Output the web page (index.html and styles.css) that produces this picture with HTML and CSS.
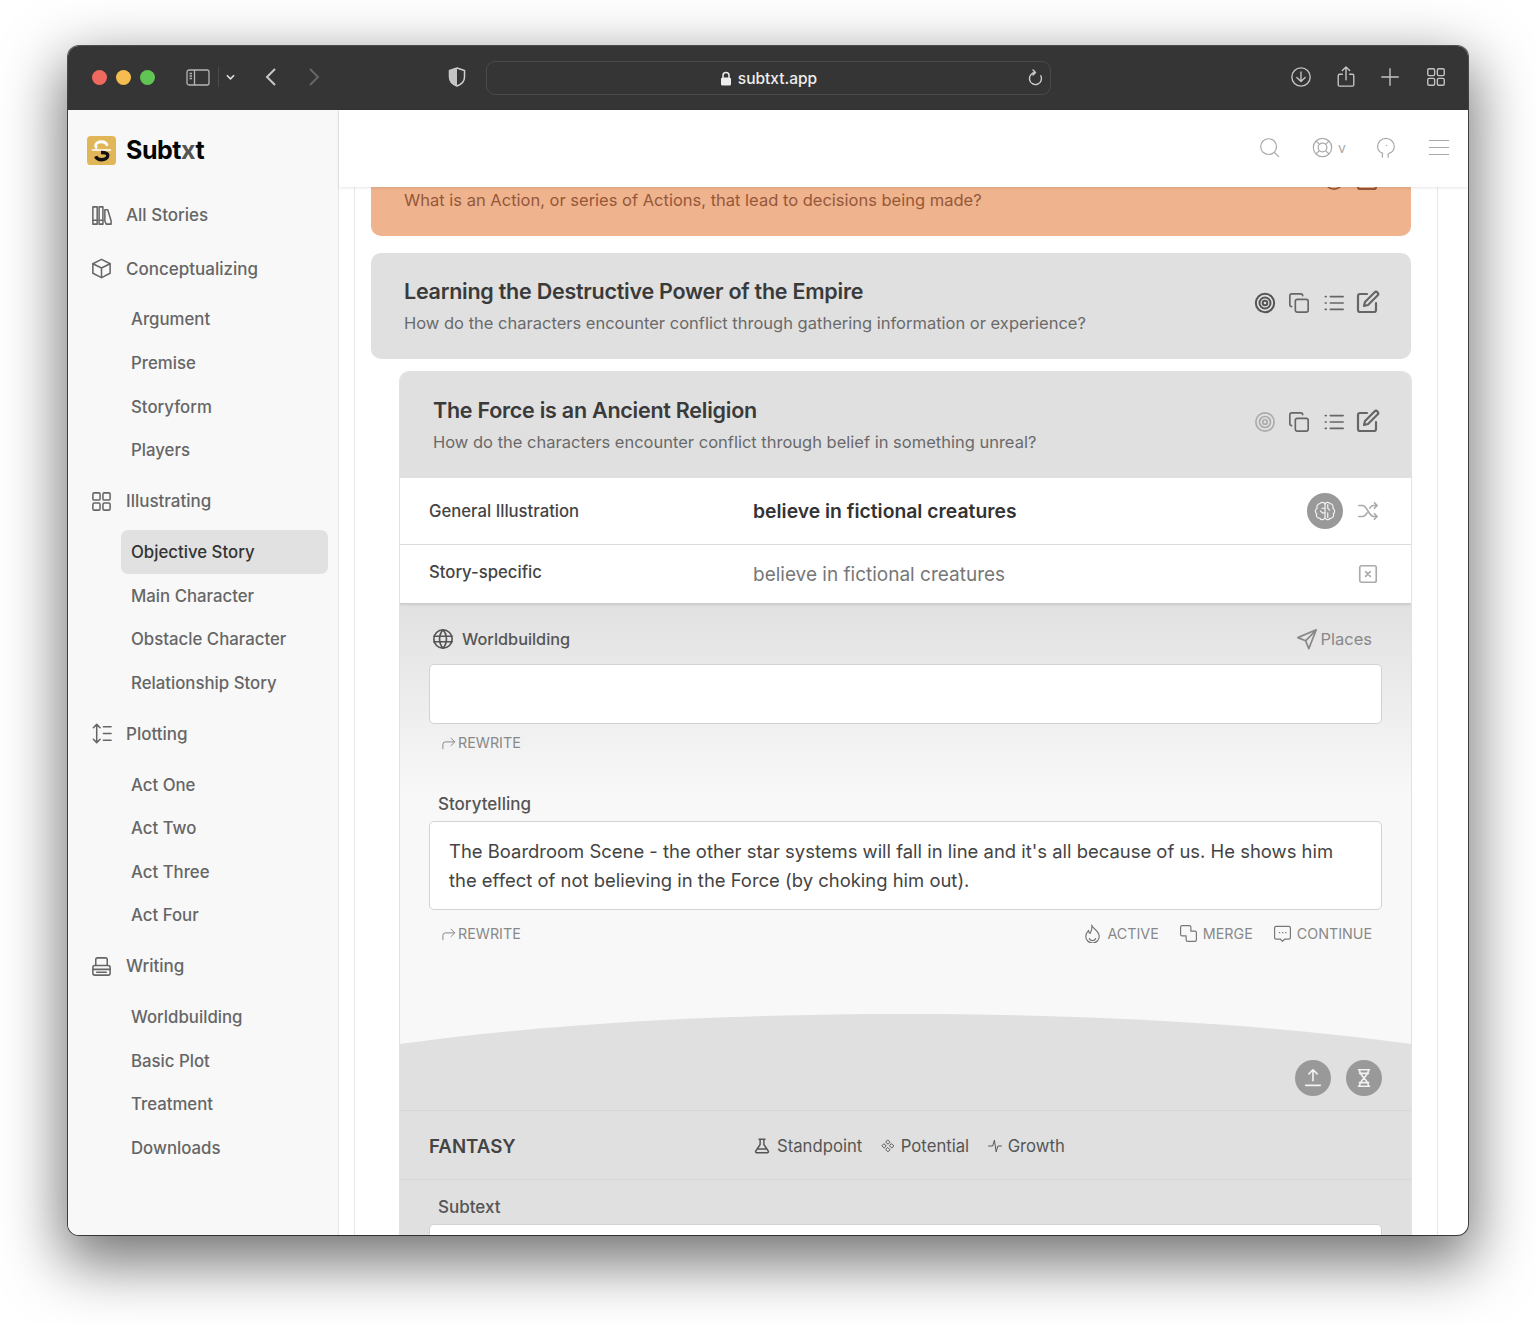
FILE: index.html
```html
<!DOCTYPE html>
<html lang="en">
<head>
<meta charset="utf-8">
<title>Subtxt</title>
<link rel="stylesheet" href="styles.css">
</head>
<body>
<svg class="sprite" aria-hidden="true">
  <symbol id="books" viewBox="0 0 24 24"><path d="M3 3h4.500v18H3zM9.500 3h4v18h-4zM15.500 6h3L22 17.500V21h-5l-1.500-3z"/><path d="M3 17h4.500M9.500 17h4"/></symbol>
  <symbol id="box" viewBox="0 0 24 24"><path d="M12 2.500l9 4.500v10l-9 4.500-9-4.500V7z"/><path d="M3 7l9 4.500L21 7M12 11.500v10"/></symbol>
  <symbol id="grid" viewBox="0 0 24 24"><rect x="3" y="3" width="7.500" height="7.500" rx="1.500"/><rect x="13.500" y="3" width="7.500" height="7.500" rx="1.500"/><rect x="3" y="13.500" width="7.500" height="7.500" rx="1.500"/><rect x="13.500" y="13.500" width="7.500" height="7.500" rx="1.500"/></symbol>
  <symbol id="plot" viewBox="0 0 24 24"><path d="M7 3v18M3.500 6L7 2.500 10.500 6M3.500 18L7 21.500l3.500-3.500M14 5h8M14 12h8M14 19h8"/></symbol>
  <symbol id="printer" viewBox="0 0 24 24"><path d="M6 11V5a2 2 0 0 1 2-2h8a2 2 0 0 1 2 2v6"/><rect x="3" y="11" width="18" height="10" rx="2"/><path d="M3 15h18M7 18h10"/></symbol>
  <symbol id="target" viewBox="0 0 24 24"><circle cx="12" cy="12" r="10"/><circle cx="12" cy="12" r="6"/><circle cx="12" cy="12" r="2.500"/></symbol>
  <symbol id="copy" viewBox="0 0 24 24"><rect x="8" y="8" width="14" height="14" rx="2"/><path d="M4 16a2 2 0 0 1-2-2V4a2 2 0 0 1 2-2h10a2 2 0 0 1 2 2"/></symbol>
  <symbol id="list" viewBox="0 0 24 24"><path d="M8 5h14M8 12h14M8 19h14M2.500 5h1M2.500 12h1M2.500 19h1"/></symbol>
  <symbol id="edit" viewBox="0 0 24 24"><path d="M11 4H4a2 2 0 0 0-2 2v14a2 2 0 0 0 2 2h14a2 2 0 0 0 2-2v-7"/><path d="M18.500 2.500a2.100 2.100 0 0 1 3 3L12 15l-4 1 1-4z"/></symbol>
  <symbol id="shuffle" viewBox="0 0 24 24"><path d="M2 6h4c5 0 7 12 12 12h4M2 18h4c2 0 3.500-1.500 5-4M14 9c1-2 2.500-3 4-3h4M19 3l3 3-3 3M19 15l3 3-3 3"/></symbol>
  <symbol id="xbox" viewBox="0 0 24 24"><rect x="3" y="3" width="18" height="18" rx="2"/><path d="M9.500 9.500l5 5M14.500 9.500l-5 5"/></symbol>
  <symbol id="globe" viewBox="0 0 24 24"><circle cx="12" cy="12" r="10"/><path d="M2 9h20M2 15h20"/><path d="M12 2c-5 5.500-5 14.500 0 20M12 2c5 5.500 5 14.500 0 20"/></symbol>
  <symbol id="send" viewBox="0 0 24 24"><path d="M22 2L2 10.500l8.500 3.500L14 22.500zM22 2L10.500 14"/></symbol>
  <symbol id="rewrite" viewBox="0 0 24 24"><path d="M3 22v-7a4 4 0 0 1 4-4h15M16 5l6 6-6 6"/></symbol>
  <symbol id="flame" viewBox="0 0 24 24"><path d="M11 1.500c.5 4 9.500 7 9.500 14a8.500 8.500 0 0 1-17 0c0-3 1.500-5.500 3.500-7.500.2 2 1 3.500 2 4C10.500 9 12 5.500 11 1.500z"/><path d="M8 18.500a4.500 4.500 0 0 0 8 0"/></symbol>
  <symbol id="merge" viewBox="0 0 24 24"><path d="M9 15H4a2 2 0 0 1-2-2V4a2 2 0 0 1 2-2h9a2 2 0 0 1 2 2v5h5a2 2 0 0 1 2 2v9a2 2 0 0 1-2 2h-9a2 2 0 0 1-2-2z"/></symbol>
  <symbol id="chat" viewBox="0 0 24 24"><path d="M4 3h16a2 2 0 0 1 2 2v12a2 2 0 0 1-2 2h-5l-3 3-3-3H4a2 2 0 0 1-2-2V5a2 2 0 0 1 2-2z"/><path d="M8 11h.5M12 11h.5M16 11h.5"/></symbol>
  <symbol id="upload" viewBox="0 0 24 24"><path d="M12 15V3M7.500 7.500L12 3l4.500 4.500M4 20h16"/></symbol>
  <symbol id="dna" viewBox="0 0 24 24"><path d="M6 3h12M6 21h12M7 3c0 7 10 11 10 18M17 3c0 7-10 11-10 18M7 7h10M7 17h10"/></symbol>
  <symbol id="brain" viewBox="0 0 24 24"><path d="M12 5a3 3 0 0 0-5.500-1A3.500 3.500 0 0 0 3.500 9 3.500 3.500 0 0 0 3 15a3.500 3.500 0 0 0 3.500 5A3 3 0 0 0 12 19zM12 5a3 3 0 0 1 5.500-1A3.500 3.500 0 0 1 20.500 9a3.500 3.500 0 0 1 .5 6 3.500 3.500 0 0 1-3.500 5A3 3 0 0 1 12 19z"/><path d="M12 9H8.500M12 14H9l-2-2M15 5v4l2 2M15 19v-5"/></symbol>
  <symbol id="flask" viewBox="0 0 24 24"><path d="M8 3h8M9.500 3v7L3.500 19a1.500 1.500 0 0 0 1.500 2h14a1.500 1.500 0 0 0 1.500-2l-6-9V3M6 16h12"/></symbol>
  <symbol id="diamonds" viewBox="0 0 24 24"><path d="M12 2l3.500 3.500L12 9 8.500 5.500zM12 15l3.500 3.500L12 22l-3.500-3.500zM5.500 8.500L9 12l-3.500 3.500L2 12zM18.500 8.500L22 12l-3.500 3.500L15 12z"/></symbol>
  <symbol id="pulse" viewBox="0 0 24 24"><path d="M1 12h7l3-10 3 20 3-10h6"/></symbol>
  <symbol id="search" viewBox="0 0 24 24"><circle cx="11" cy="11" r="9"/><path d="M18 18l4.500 4.500"/></symbol>
  <symbol id="life" viewBox="0 0 24 24"><circle cx="12" cy="12" r="10.500"/><circle cx="12" cy="12" r="5"/><path d="M5 5l3.500 3.500M19 5l-3.500 3.500M5 19l3.500-3.500M19 19l-3.500-3.500"/></symbol>
  <symbol id="head" viewBox="0 0 24 24"><path d="M8.500 23v-4.500C5 17 3 14.500 3 11a9.500 9.500 0 0 1 19 0c0 3.500-2 6-5.500 7.500l-1.500 1V23M13 9.500h.5"/></symbol>
  <symbol id="menu" viewBox="0 0 24 24"><path d="M1 4h22M1 12h22M1 20h22"/></symbol>
  <symbol id="dl" viewBox="0 0 24 24"><circle cx="12" cy="12" r="10"/><path d="M12 6.500v10.500M7.500 12.500L12 17l4.500-4.500"/></symbol>
  <symbol id="share" viewBox="0 0 24 24"><path d="M8 9H5a1.500 1.500 0 0 0-1.500 1.500v10A1.500 1.500 0 0 0 5 22h14a1.500 1.500 0 0 0 1.500-1.500v-10A1.500 1.500 0 0 0 19 9h-3M12 15V1.500M8 5l4-4 4 4"/></symbol>
  <symbol id="plus" viewBox="0 0 24 24"><path d="M12 3v18M3 12h18"/></symbol>
  <symbol id="reload" viewBox="0 0 24 24"><path d="M12 5a8.500 8.500 0 1 0 7.500 4.500M8.500 1.500L12 5 8.500 8.500"/></symbol>
</svg>

<div class="window">
  <header class="titlebar">
    <span class="dot dot-red"></span><span class="dot dot-yellow"></span><span class="dot dot-green"></span>
    <svg class="tb-side" viewBox="0 0 24 17"><rect x="1" y="1" width="22" height="15" rx="2"/><path d="M8.500 1v15M3.500 4.500h2.500M3.500 7h2.500M3.500 9.500h2.500"/></svg>
    <span class="tb-sep"></span>
    <svg class="tb-caret" viewBox="0 0 10 6"><path d="M1 1l4 4 4-4"/></svg>
    <svg class="tb-back" viewBox="0 0 12 20"><path d="M10 2L2 10l8 8"/></svg>
    <svg class="tb-forward" viewBox="0 0 12 20"><path d="M2 2l8 8-8 8"/></svg>
    <svg class="tb-shield" viewBox="0 0 18 20"><path class="shield-line" d="M9 1l7.500 2.500V10c0 4.500-3.500 7.500-7.500 9-4-1.500-7.500-4.500-7.500-9V3.500z"/><path class="shield-fill" d="M9 1L1.500 3.500V10c0 4.500 3.500 7.500 7.500 9z"/></svg>
    <div class="urlbar">
      <svg class="lock" viewBox="0 0 12 15"><path class="lock-arc" d="M3 7V4.500a3 3 0 0 1 6 0V7"/><rect class="lock-body" x="1" y="6.500" width="10" height="8" rx="1.500"/></svg>
      <span class="url">subtxt.app</span>
      <svg class="ic tb-reload"><use href="#reload"/></svg>
    </div>
    <svg class="ic tb-r tb-dl"><use href="#dl"/></svg>
    <svg class="ic tb-r tb-share"><use href="#share"/></svg>
    <svg class="ic tb-r tb-plus"><use href="#plus"/></svg>
    <svg class="ic tb-r tb-grid"><use href="#grid"/></svg>
  </header>

  <div class="app">
    <aside class="sidebar">
      <div class="brand">
        <svg class="logo" viewBox="0 0 30 30">
          <rect width="30" height="30" rx="4" fill="#e1b659"/>
          <path d="M21 10c-1-3-4-4-6-4-3 0-6 1.500-6 4 0 1 .5 2 1.500 2.500" fill="none" stroke="#fff" stroke-width="3"/>
          <path d="M5 14.500h20" stroke="#fff" stroke-width="1.500"/>
          <path d="M9 21c1 2.500 4 3.500 6 3.500 3.500 0 6.500-1.500 6.500-4.500 0-2.500-4-3-7-3" fill="none" stroke="#111" stroke-width="3.500"/>
        </svg>
        <span class="brand-name">Subt<span class="brand-x">x</span>t</span>
      </div>
      <nav class="nav">
        <a class="nav-sec nav-first"><svg class="ic"><use href="#books"/></svg>All Stories</a>
        <a class="nav-sec"><svg class="ic"><use href="#box"/></svg>Conceptualizing</a>
        <a class="nav-sub">Argument</a>
        <a class="nav-sub">Premise</a>
        <a class="nav-sub">Storyform</a>
        <a class="nav-sub">Players</a>
        <a class="nav-sec"><svg class="ic"><use href="#grid"/></svg>Illustrating</a>
        <a class="nav-sub nav-active">Objective Story</a>
        <a class="nav-sub">Main Character</a>
        <a class="nav-sub">Obstacle Character</a>
        <a class="nav-sub">Relationship Story</a>
        <a class="nav-sec"><svg class="ic"><use href="#plot"/></svg>Plotting</a>
        <a class="nav-sub">Act One</a>
        <a class="nav-sub">Act Two</a>
        <a class="nav-sub">Act Three</a>
        <a class="nav-sub">Act Four</a>
        <a class="nav-sec"><svg class="ic"><use href="#printer"/></svg>Writing</a>
        <a class="nav-sub">Worldbuilding</a>
        <a class="nav-sub">Basic Plot</a>
        <a class="nav-sub">Treatment</a>
        <a class="nav-sub">Downloads</a>
      </nav>
    </aside>

    <main class="main">
      <div class="topbar">
        <svg class="ic top-ic top-search"><use href="#search"/></svg>
        <svg class="ic top-ic top-life"><use href="#life"/></svg>
        <span class="top-v">v</span>
        <svg class="ic top-ic top-head"><use href="#head"/></svg>
        <svg class="ic top-ic top-menu"><use href="#menu"/></svg>
      </div>
      <div class="viewport">
        <div class="column">
          <section class="card card-orange">
            <div class="card-text">
              <h2 class="card-title">&nbsp;</h2>
              <p class="card-sub">What is an Action, or series of Actions, that lead to decisions being made?</p>
            </div>
            <div class="actions">
              <svg class="ic"><use href="#target"/></svg>
              <svg class="ic act-edit"><use href="#edit"/></svg>
            </div>
          </section>

          <section class="card">
            <div class="card-text">
              <h2 class="card-title">Learning the Destructive Power of the Empire</h2>
              <p class="card-sub">How do the characters encounter conflict through gathering information or experience?</p>
            </div>
            <div class="actions">
              <svg class="ic act-target"><use href="#target"/></svg>
              <svg class="ic"><use href="#copy"/></svg>
              <svg class="ic"><use href="#list"/></svg>
              <svg class="ic act-edit"><use href="#edit"/></svg>
            </div>
          </section>

          <section class="scene">
            <div class="card card-nested">
              <div class="card-text">
                <h2 class="card-title">The Force is an Ancient Religion</h2>
                <p class="card-sub">How do the characters encounter conflict through belief in something unreal?</p>
              </div>
              <div class="actions">
                <svg class="ic act-target-dim"><use href="#target"/></svg>
                <svg class="ic"><use href="#copy"/></svg>
                <svg class="ic"><use href="#list"/></svg>
                <svg class="ic act-edit"><use href="#edit"/></svg>
              </div>
            </div>

            <div class="row row-general">
              <span class="row-label">General Illustration</span>
              <strong class="row-value">believe in fictional creatures</strong>
              <span class="row-tools">
                <span class="round"><svg class="ic"><use href="#brain"/></svg></span>
                <svg class="ic tool-light"><use href="#shuffle"/></svg>
              </span>
            </div>
            <div class="row row-specific">
              <span class="row-label">Story-specific</span>
              <span class="row-value-light">believe in fictional creatures</span>
              <span class="row-tools"><svg class="ic tool-light"><use href="#xbox"/></svg></span>
            </div>

            <div class="panel">
              <div class="field-head">
                <span class="field-title"><svg class="ic"><use href="#globe"/></svg>Worldbuilding</span>
                <span class="places"><svg class="ic"><use href="#send"/></svg>Places</span>
              </div>
              <div class="box box-empty"></div>
              <div class="box-foot box-foot-first">
                <span class="link"><svg class="ic"><use href="#rewrite"/></svg>REWRITE</span>
              </div>

              <div class="story-label">Storytelling</div>
              <div class="box box-story">The Boardroom Scene - the other star systems will fall in line and it's all because of us. He shows him the effect of not believing in the Force (by choking him out).</div>
              <div class="box-foot">
                <span class="link"><svg class="ic"><use href="#rewrite"/></svg>REWRITE</span>
                <span class="links-right">
                  <span class="link link-big"><svg class="ic"><use href="#flame"/></svg>ACTIVE</span>
                  <span class="link link-big"><svg class="ic"><use href="#merge"/></svg>MERGE</span>
                  <span class="link link-big"><svg class="ic"><use href="#chat"/></svg>CONTINUE</span>
                </span>
              </div>
            </div>

            <svg class="arc" viewBox="0 0 1013 32" preserveAspectRatio="none"><path d="M0 32V31C160 9 340 1 506 1s346 8 507 30v1z"/></svg>

            <div class="fabs">
              <span class="fab"><svg class="ic"><use href="#upload"/></svg></span>
              <span class="fab"><svg class="ic"><use href="#dna"/></svg></span>
            </div>

            <div class="fantasy">
              <strong class="fantasy-name">FANTASY</strong>
              <span class="fantasy-tags">
                <span class="tag tag-flask"><svg class="ic"><use href="#flask"/></svg>Standpoint</span>
                <span class="tag tag-small"><svg class="ic"><use href="#diamonds"/></svg>Potential</span>
                <span class="tag tag-small"><svg class="ic"><use href="#pulse"/></svg>Growth</span>
              </span>
            </div>

            <div class="subtext">
              <div class="story-label">Subtext</div>
              <div class="box box-sub"></div>
            </div>
          </section>
        </div>
      </div>
    </main>
  </div>
</div>
</body>
</html>
```

FILE: styles.css
```css
* { box-sizing: border-box; }
html, body { margin: 0; height: 100%; }
body {
  background: #fff;
  padding: 46px 68px 89px;
  font-family: Inter, "Liberation Sans", sans-serif;
  color: #555;
  overflow: hidden;
}
.sprite { display: none; }
.ic {
  width: 22px; height: 22px;
  fill: none; stroke: currentColor; stroke-width: 1.8;
  stroke-linecap: round; stroke-linejoin: round;
  flex: none;
}

.window {
  height: 1189px;
  border-radius: 11px;
  overflow: hidden;
  display: flex;
  flex-direction: column;
  background: #fff;
  box-shadow: 0 0 0 1px rgba(0,0,0,.65), 0 22px 60px 6px rgba(0,0,0,.55);
}

/* browser chrome */
.titlebar {
  height: 64px;
  flex: none;
  background: #353535;
  display: flex;
  align-items: center;
  padding: 0 0 2px 24px;
  color: #c4c4c4;
}
.dot { width: 15px; height: 15px; border-radius: 50%; margin-right: 9px; }
.dot-red { background: #ee6a5f; }
.dot-yellow { background: #f5bd4f; }
.dot-green { background: #61c454; margin-right: 31px; }
.tb-side { width: 24px; height: 17px; fill: none; stroke: #b5b5b5; stroke-width: 1.3; }
.tb-sep { width: 1px; height: 20px; background: #4b4b4b; margin: 0 7px 0 8px; }
.tb-caret { width: 9px; height: 6px; fill: none; stroke: #ddd; stroke-width: 1.8; }
.tb-back { width: 12px; height: 20px; margin-left: 30px; fill: none; stroke: #c8c8c8; stroke-width: 2; }
.tb-forward { width: 12px; height: 20px; margin-left: 31px; fill: none; stroke: #666; stroke-width: 2; }
.tb-shield { width: 18px; height: 20px; margin-left: 128px; }
.shield-line { fill: none; stroke: #d0d0d0; stroke-width: 1.5; }
.shield-fill { fill: #c4c4c4; }
.urlbar {
  width: 565px; height: 34px;
  margin: 2px 0 0 20px;
  border: 1px solid #4a4a4a;
  border-radius: 9px;
  display: flex;
  align-items: center;
  justify-content: center;
  position: relative;
  gap: 6px;
  color: #eee;
}
.lock { width: 12px; height: 15px; }
.lock-arc { fill: none; stroke: #eee; stroke-width: 1.5; }
.lock-body { fill: #eee; }
.url { font-size: 15.5px; font-weight: 500; }
.tb-reload { position: absolute; right: 6px; top: 7px; width: 17px; height: 17px; color: #ccc; stroke-width: 2; }
.tb-r { width: 22px; height: 22px; stroke-width: 1.5; }
.tb-dl { margin-left: 239px; }
.tb-share { margin-left: 23px; }
.tb-plus { margin-left: 22px; }
.tb-grid { margin-left: 24px; }

/* app shell */
.app { flex: 1; min-height: 0; display: flex; }
.sidebar {
  width: 271px;
  flex: none;
  background: #f8f8f8;
  border-right: 1px solid #e6e6e6;
  padding: 26px 10px 0 0;
  overflow: hidden;
}
.brand { display: flex; align-items: center; gap: 10px; padding-left: 19px; height: 29px; }
.logo { width: 29px; height: 29px; flex: none; }
.brand-name { font-size: 25px; font-weight: 700; color: #050505; letter-spacing: -.45px; padding-bottom: 2px; }
.brand-x { color: #555; }
.nav { display: flex; flex-direction: column; padding-top: 21.4px; }
.nav-sec {
  height: 44px;
  margin: 7.1px 0;
  display: flex;
  align-items: center;
  gap: 13px;
  padding-left: 22px;
  font-size: 17px;
  font-weight: 500;
  color: #666;
}
.nav-first { margin-bottom: 2px; }
.nav-sec .ic { width: 23px; height: 23px; color: #666; stroke-width: 1.6; }
.nav-sub {
  height: 43.6px;
  margin-left: 53px;
  padding-left: 10px;
  display: flex;
  align-items: center;
  font-size: 16.8px;
  font-weight: 500;
  color: #666;
  border-radius: 7px;
}
.nav-active { background: #e1e1e1; color: #333; }

.main { flex: 1; min-width: 0; display: flex; flex-direction: column; }
.topbar {
  height: 77px;
  flex: none;
  background: #fff;
  position: relative;
  z-index: 1;
  box-shadow: 0 1px 3px rgba(0,0,0,.1);
  display: flex;
  align-items: center;
  justify-content: flex-end;
  color: #aaa;
  padding: 0 18px 2px 0;
}
.top-ic { width: 21px; height: 21px; stroke-width: 1.4; }
.top-life { margin-left: 32px; }
.top-v { font-size: 14px; margin-left: 5px; width: 10px; }
.top-head { margin-left: 27px; }
.top-menu { margin-left: 32px; width: 22px; }

.viewport { flex: 1; min-height: 0; overflow: hidden; }
.column {
  margin-left: 15px;
  width: 1084px;
  height: 1200px;
  margin-top: -57px;
  border-left: 1px solid #e6e6e6;
  border-right: 1px solid #e6e6e6;
  padding: 0 26px 0 16px;
}

.card {
  height: 106px;
  background: #e0e0e0;
  border-radius: 10px;
  display: flex;
  align-items: center;
  justify-content: space-between;
  padding: 0 31px 0 33px;
  margin-bottom: 17px;
}
.card-orange { background: #efb38e; }
.card-orange .card-sub, .card-orange .actions { color: #95583a; }
.card-text { padding-bottom: 1px; }
.card-title { margin: 0 0 6px; font-size: 21.5px; line-height: 28px; font-weight: 600; color: #3a3a3a; letter-spacing: -.25px; }
.card-sub { margin: 0; font-size: 16.5px; line-height: 24px; color: #6a6a6a; }
.actions { display: flex; gap: 12.5px; color: #666; padding-bottom: 6px; }
.act-target { color: #555; stroke-width: 2.2; }
.act-target-dim { color: #aaa; stroke-width: 1.8; }
.act-edit { width: 24px; height: 24px; stroke-width: 2.2; margin: -2px 0 0 -1px; }

.scene {
  margin: -5px -1px 0 28px;
  background: #f8f8f8;
  border: 1px solid #e2e2e2;
  border-bottom: 0;
  border-radius: 10px 10px 0 0;
  overflow: hidden;
}
.card-nested {
  height: 106px;
  margin: 0;
  border-radius: 0;
  padding-left: 33px;
  padding-right: 31px;
}
.row {
  display: grid;
  grid-template-columns: 324px 1fr auto;
  align-items: center;
  background: #fff;
  padding: 0 32px 0 29px;
}
.row-general { height: 67px; border-bottom: 1px solid #ddd; }
.row-specific { height: 59px; border-bottom: 1px solid #ccc; box-shadow: 0 1px 2px rgba(0,0,0,.1); position: relative; }
.row-label { font-size: 16.7px; font-weight: 500; color: #444; }
.row-specific .row-label { padding-bottom: 4px; }
.row-value { font-size: 19.35px; font-weight: 600; color: #333; }
.row-value-light { font-size: 19px; color: #777; }
.row-tools { display: flex; align-items: center; gap: 14px; }
.round {
  width: 36px; height: 36px; border-radius: 50%;
  background: #999; color: #f2f2f2;
  display: flex; align-items: center; justify-content: center;
}
.round .ic { stroke-width: 1.3; }
.tool-light { color: #aaa; }

.panel {
  height: 410px;
  padding: 23px 29px 0;
  background: linear-gradient(#e1e1e1 0, #f8f8f8 190px);
}
.field-head { display: flex; justify-content: space-between; align-items: center; padding: 0 10px 0 3px; height: 24px; }
.field-title { display: flex; align-items: center; gap: 8px; font-size: 16.3px; font-weight: 500; color: #555; }
.field-title .ic { color: #555; }
.places { display: flex; align-items: center; gap: 2px; font-size: 16.5px; color: #888; }
.box {
  background: #fff;
  border: 1px solid #d2d2d2;
  border-radius: 5px;
}
.box-empty { height: 60px; margin-top: 13px; }
.box-foot { display: flex; justify-content: space-between; align-items: center; padding: 0 10px 0 12px; height: 24px; margin-top: 11px; }
.box-foot-first { margin-top: 6px; }
.link { display: flex; align-items: center; gap: 2px; font-size: 14.3px; color: #888; }
.link .ic { width: 15px; height: 15px; stroke-width: 1.6; }
.link-big { gap: 5px; }
.link-big .ic { width: 19px; height: 19px; stroke-width: 1.5; color: #777; }
.links-right { display: flex; gap: 20px; }
.story-label { font-size: 17px; font-weight: 500; color: #555; padding-left: 9px; line-height: 24px; }
.box-foot-first + .story-label { margin-top: 38px; }
.box-story {
  margin-top: 5px;
  height: 89px;
  padding: 15px 19px;
  font-size: 18.45px;
  line-height: 29px;
  color: #444;
}

.arc { display: block; width: 100%; height: 32px; fill: #e0e0e0; margin-top: -1px; }
.fabs {
  background: #e0e0e0;
  height: 66px;
  display: flex;
  justify-content: flex-end;
  gap: 15px;
  padding: 15px 29px 0 0;
  border-bottom: 1px solid #d6d6d6;
}
.fab {
  width: 36px; height: 36px; border-radius: 50%;
  background: #999; color: #f2f2f2;
  display: flex; align-items: center; justify-content: center;
}
.fantasy {
  height: 69px;
  background: #e0e0e0;
  border-bottom: 1px solid #d6d6d6;
  display: grid;
  grid-template-columns: 324px 1fr;
  align-items: center;
  padding: 2px 0 0 29px;
}
.fantasy-name { font-size: 18.7px; font-weight: 600; color: #444; }
.fantasy-tags { display: flex; gap: 18.5px; }
.tag { display: flex; align-items: center; gap: 6px; font-size: 16.7px; color: #555; }
.tag .ic { width: 17px; height: 17px; stroke-width: 1.7; }
.tag-flask .ic { width: 18px; height: 18px; stroke-width: 1.9; }
.tag-small .ic { width: 14px; height: 14px; }
.subtext { background: #e0e0e0; padding: 15px 29px 0; height: 200px; }
.box-sub { margin-top: 5px; height: 100px; }
```
